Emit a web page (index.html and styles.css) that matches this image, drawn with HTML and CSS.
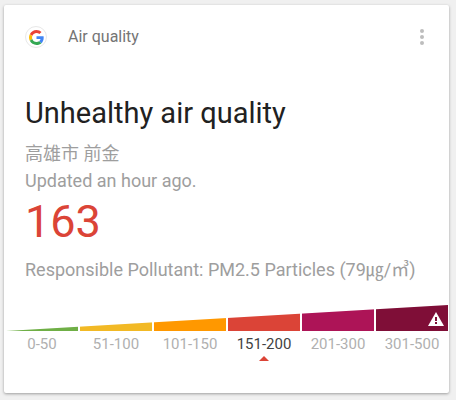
FILE: index.html
```html
<!DOCTYPE html>
<html lang="en">
<head>
    <meta charset="UTF-8">
    <title>Air quality</title>
    <meta name="viewport" content="width=device-width, initial-scale=1.0">
    <link rel="stylesheet" href="styles.css">
</head>
<body>
    <main class="card">
        <header class="card-header">
            <span class="logo">
                <svg viewBox="0 0 48 48" width="15" height="15" aria-hidden="true">
                    <path fill="#EA4335" d="M24 9.5c3.54 0 6.71 1.22 9.21 3.6l6.85-6.85C35.9 2.38 30.47 0 24 0 14.62 0 6.51 5.38 2.56 13.22l7.98 6.19C12.43 13.72 17.74 9.5 24 9.5z"/>
                    <path fill="#4285F4" d="M46.98 24.55c0-1.57-.15-3.09-.38-4.55H24v9.02h12.94c-.58 2.96-2.26 5.48-4.78 7.18l7.73 6c4.51-4.18 7.09-10.36 7.09-17.65z"/>
                    <path fill="#FBBC05" d="M10.53 28.59c-.48-1.45-.76-2.99-.76-4.59s.27-3.14.76-4.59l-7.98-6.19C.92 16.46 0 20.12 0 24c0 3.88.92 7.54 2.56 10.78l7.97-6.19z"/>
                    <path fill="#34A853" d="M24 48c6.48 0 11.93-2.13 15.89-5.81l-7.73-6c-2.15 1.45-4.92 2.3-8.16 2.3-6.26 0-11.57-4.22-13.47-9.91l-7.98 6.19C6.51 42.62 14.62 48 24 48z"/>
                </svg>
            </span>
            <span class="card-title">Air quality</span>
            <button class="menu" type="button" aria-label="More options">
                <svg viewBox="0 0 4 16" width="4" height="16" aria-hidden="true">
                    <circle cx="2" cy="2" r="2"/>
                    <circle cx="2" cy="8" r="2"/>
                    <circle cx="2" cy="14" r="2"/>
                </svg>
            </button>
        </header>
        <section class="summary">
            <h1>Unhealthy air quality</h1>
            <p class="detail" lang="zh-TW">高雄市 前金</p>
            <p class="detail">Updated an hour ago.</p>
            <p class="aqi">163</p>
            <p class="detail">Responsible Pollutant: PM2.5 Particles (79㎍/㎥)</p>
        </section>
        <section class="scale">
            <div class="bar">
                <span class="good"></span>
                <span class="moderate"></span>
                <span class="sensitive"></span>
                <span class="unhealthy"></span>
                <span class="very-unhealthy"></span>
                <span class="hazardous">
                    <svg viewBox="0 0 16 14" width="16" height="14" aria-hidden="true">
                        <path fill="#fff" d="M8 0l8 14H0z"/>
                        <path fill="#7f0e37" d="M7 5h2v4H7zM7 10h2v2H7z"/>
                    </svg>
                </span>
            </div>
            <ul class="labels">
                <li>0-50</li>
                <li>51-100</li>
                <li>101-150</li>
                <li class="current">151-200</li>
                <li>201-300</li>
                <li>301-500</li>
            </ul>
        </section>
    </main>
</body>
</html>
```

FILE: styles.css
```css
body {
    margin: 0;
    padding: 5px 7px 7px 4px;
    background-color: #f0f0f0;
    font-family: Roboto, "Noto Sans CJK TC", sans-serif;
}
.card {
    background-color: #fff;
    border-radius: 2px;
    box-shadow: 0 1px 3px rgba(0,0,0,0.35);
    padding-bottom: 32px;
}
.card-header {
    display: flex;
    align-items: center;
    padding: 20px 21px;
}
.logo {
    display: flex;
    align-items: center;
    justify-content: center;
    box-sizing: border-box;
    width: 22px;
    height: 22px;
    border: 1px solid #e8e8e8;
    border-radius: 50%;
}
.card-title {
    flex-grow: 1;
    margin-left: 21px;
    font-size: 16px;
    line-height: 24px;
    color: #757575;
}
.menu {
    display: flex;
    padding: 0 4px;
    border: none;
    background: none;
    cursor: pointer;
}
.menu svg {
    fill: #bdbdbd;
}
.summary {
    padding: 24px 21px 22px;
}
h1 {
    margin: 0 0 7px;
    font-size: 29px;
    font-weight: 400;
    line-height: 40px;
    color: #212121;
}
p {
    margin: 0;
}
.detail {
    font-size: 18px;
    line-height: 27px;
    color: #9e9e9e;
}
.aqi {
    margin-bottom: 6px;
    font-size: 45px;
    line-height: 56px;
    color: #db4437;
}
.scale {
    padding: 0 1px 0 2px;
}
/* six equal bands cut to a wedge that rises to the right */
.bar {
    display: grid;
    grid-template-columns: repeat(6, 1fr);
    gap: 2px;
    height: 26px;
    clip-path: polygon(0 100%, 100% 0, 100% 100%);
}
.good {
    background-color: #6faf46;
}
.moderate {
    background-color: #f2b925;
}
.sensitive {
    background-color: #ff9800;
}
.unhealthy {
    background-color: #db4437;
}
.very-unhealthy {
    background-color: #ad1457;
}
.hazardous {
    display: flex;
    align-items: flex-end;
    justify-content: flex-end;
    padding: 0 4px 5px 0;
    background-color: #7f0e37;
}
.labels {
    display: grid;
    grid-template-columns: repeat(6, 1fr);
    gap: 2px;
    margin: 0;
    padding: 3px 0 0;
    list-style: none;
    font-size: 15px;
    line-height: 20px;
    text-align: center;
    color: #b0b0b0;
}
.current {
    color: #424242;
}
.current::after {
    content: "";
    display: block;
    width: 10px;
    height: 5px;
    margin: 2px auto 0;
    background-color: #db4437;
    clip-path: polygon(50% 0, 100% 100%, 0 100%);
}
```
